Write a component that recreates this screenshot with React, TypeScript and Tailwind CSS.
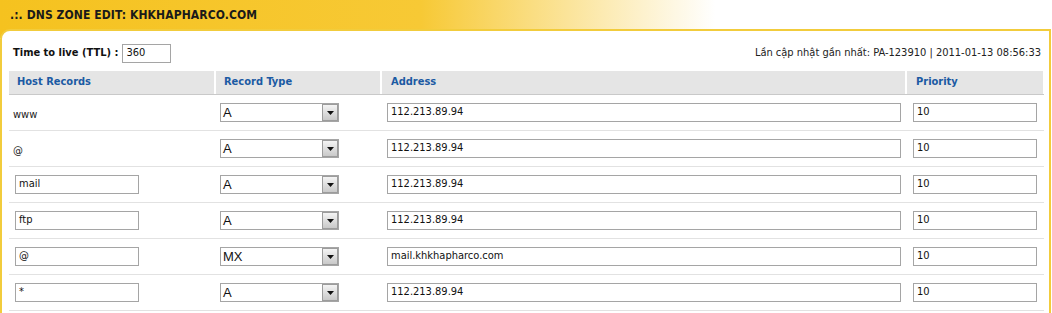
const records = [
    { host: "www", editable: false, type: "A", address: "112.213.89.94", priority: "10" },
    { host: "@", editable: false, type: "A", address: "112.213.89.94", priority: "10" },
    { host: "mail", editable: true, type: "A", address: "112.213.89.94", priority: "10" },
    { host: "ftp", editable: true, type: "A", address: "112.213.89.94", priority: "10" },
    { host: "@", editable: true, type: "MX", address: "mail.khkhapharco.com", priority: "10" },
    { host: "*", editable: true, type: "A", address: "112.213.89.94", priority: "10" },
]

const font = "font-['Tahoma','DejaVu_Sans_Condensed','Liberation_Sans',sans-serif]"

function TextBox({ value, width }: { value: string, width: string }) {
    return (
        <div className={`${width} h-[19px] border border-[#a5a5a5] bg-white flex items-center pl-[3px] text-[11px] text-[#111]`}>
            {value}
        </div>
    )
}

function TypeSelect({ value }: { value: string }) {
    return (
        <div className="w-[119px] h-[19px] border border-[#a5a5a5] bg-white flex items-center">
            <span className="flex-1 pl-[2px] text-[13px] leading-none text-[#111] font-['Liberation_Sans',sans-serif]">
                {value}
            </span>
            <div className="w-[16px] h-[17px] border border-[#9c9c9c] bg-gradient-to-b from-[#f4f4f4] to-[#c9c9c9] flex items-center justify-center">
                <svg width="7" height="4" viewBox="0 0 7 4">
                    <path d="M0 0h7L3.5 4z" fill="#111" />
                </svg>
            </div>
        </div>
    )
}

export default function App() {
    return (
        <div className={`w-[1052px] h-[313px] overflow-hidden bg-white ${font}`}>
            <div className="bg-[linear-gradient(to_right,#f5c21f_0%,#f7c935_40%,#ffffff_68%)] bg-[length:100%_38px] bg-no-repeat">
                <div className="h-[29px] flex items-center pl-[10px] text-[12px] font-bold tracking-[0.1px] text-[#1a1a1a]">
                    .:. DNS ZONE EDIT: KHKHAPHARCO.COM
                </div>
                <div className="mr-[1px] bg-white border-2 border-[#f2cc3c] rounded-tl-[10px] pl-[7px] pr-[5px] pb-4">
                    <div className="h-[40px] flex items-center justify-between pl-[4px] pr-[3px] pt-[4px]">
                        <div className="flex items-center gap-[4px]">
                            <span className="text-[11px] font-bold text-[#111]">Time to live (TTL) :</span>
                            <TextBox value="360" width="w-[49px]" />
                        </div>
                        <span className="text-[11px] text-[#222]">
                            Lần cập nhật gần nhất: PA-123910 | 2011-01-13 08:56:33
                        </span>
                    </div>
                    <div className="grid grid-cols-[205px_164px_523px_136px] gap-x-[2px] h-[24px] border-b border-[#c9c9c9] text-[11px] font-bold text-[#1b5aa3]">
                        <div className="bg-[#e5e5e5] flex items-center pl-[8px]">Host Records</div>
                        <div className="bg-[#e5e5e5] flex items-center pl-[8px]">Record Type</div>
                        <div className="bg-[#e5e5e5] flex items-center pl-[9px]">Address</div>
                        <div className="bg-[#e5e5e5] flex items-center pl-[9px]">Priority</div>
                    </div>
                    {records.map((r, i) => (
                        <div
                            key={i}
                            className="grid grid-cols-[205px_164px_523px_136px] gap-x-[2px] h-[36px] border-b border-[#e2e2e2] items-center"
                        >
                            <div className="pl-[4px]">
                                {r.editable ? (
                                    <div className="pl-[2px]">
                                        <TextBox value={r.host} width="w-[124px]" />
                                    </div>
                                ) : (
                                    <span className="text-[11px] text-[#222]">{r.host}</span>
                                )}
                            </div>
                            <div className="pl-[4px]">
                                <TypeSelect value={r.type} />
                            </div>
                            <div className="pl-[5px]">
                                <TextBox value={r.address} width="w-[514px]" />
                            </div>
                            <div className="pl-[6px]">
                                <TextBox value={r.priority} width="w-[124px]" />
                            </div>
                        </div>
                    ))}
                </div>
            </div>
        </div>
    )
}
